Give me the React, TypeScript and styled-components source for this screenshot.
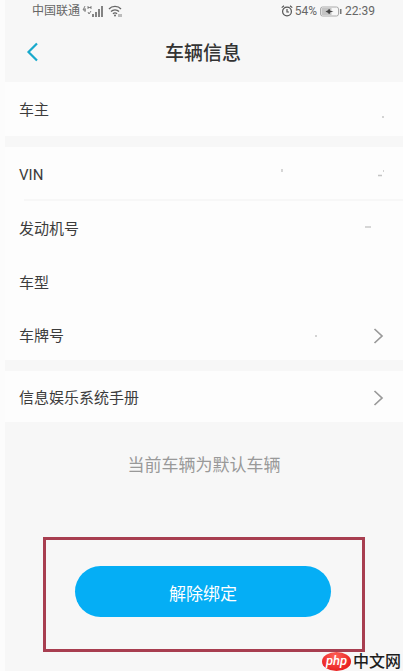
import React from "react";
import styled, { createGlobalStyle } from "styled-components";

const GlobalStyle = createGlobalStyle`
  * { box-sizing: border-box; }
  html, body { margin: 0; background: #f7f7f7; }
  body, button {
    font-family: Roboto, "Noto Sans CJK SC", sans-serif;
  }
`;

const Page = styled.div`
  position: relative;
  display: flex;
  flex-direction: column;
  min-height: 100vh;
  background: #f7f7f7;
  border-left: 5px solid #fcfcfc;
  overflow: hidden;
`;

const StatusBar = styled.div`
  display: flex;
  justify-content: space-between;
  align-items: center;
  height: 22px;
  padding: 0 28px 0 27px;
  font-size: 12px;
  line-height: 20px;
  color: #666;
`;

const StatusGroup = styled.div`
  display: flex;
  align-items: center;
  gap: 2px;
`;

const Header = styled.header`
  display: grid;
  grid-template-columns: 56px 1fr 56px;
  align-items: center;
  height: 60px;
`;

const BackButton = styled.button`
  display: flex;
  align-items: center;
  height: 40px;
  padding: 0 0 0 21px;
  border: 0;
  background: none;
  color: #18a9cc;
  cursor: pointer;
`;

const Title = styled.h1`
  margin: 0;
  padding: 4px 2px 0 0;
  text-align: center;
  font-size: 19px;
  line-height: 28px;
  font-weight: 500;
  color: #333;
`;

const Section = styled.section`
  margin-bottom: 11px;
  background: #fdfdfd;
`;

const Row = styled.div<{ $short?: boolean }>`
  display: flex;
  align-items: center;
  justify-content: space-between;
  width: 100%;
  height: ${(p) => (p.$short ? 51 : 54)}px;
  padding: 2px 19px 0 14px;
  border: 0;
  background: none;
  text-align: left;
  font-size: 15px;
  line-height: 22px;
  color: #3c3c3c;
`;

const LinkRow = styled(Row).attrs({ as: "button" })`
  cursor: pointer;
`;

const Divider = styled.hr`
  height: 2px;
  margin: -2px 0 0 19px;
  border: 0;
  background: #f7f7f7;
`;

const Footer = styled.main`
  display: flex;
  flex-direction: column;
  padding: 20px 38px 19px;
`;

const Notice = styled.p`
  margin: 0 0 60px;
  text-align: center;
  font-size: 17px;
  line-height: 24px;
  color: #999;
`;

const Highlight = styled.div`
  padding: 26px 31px 32px 29px;
  border: 3px solid #a83e50;
`;

const UnbindButton = styled.button`
  display: block;
  width: 100%;
  height: 51px;
  padding: 4px 0 0;
  border: 0;
  border-radius: 26px;
  background: #05aef5;
  color: #fff;
  font-size: 17px;
  line-height: 24px;
  cursor: pointer;
`;

const Watermark = styled.div`
  position: absolute;
  right: 2px;
  bottom: 0;
  display: flex;
  align-items: center;
  gap: 2px;
  height: 19px;
  color: #1d1d1d;
  font-size: 16px;
  line-height: 19px;
  font-weight: 500;
`;

const PhpBadge = styled.span`
  width: 29px;
  height: 19px;
  border-radius: 50%;
  background: radial-gradient(ellipse at 45% 25%, #ff6258, #e91f20 75%);
  color: #fff;
  text-align: center;
  font-size: 13px;
  line-height: 17px;
  font-style: italic;
`;

const Signal = () => (
  <svg width="24" height="13" viewBox="0 0 24 13" fill="none" stroke="#666" aria-hidden="true">
    <path d="M3 1 1 5h3M3 3v4M6 1v3M9 1v3M6 2.5h3M6 7l1 2 2-3" strokeWidth=".8" />
    <path d="M11 12V9M14 12V7M17 12V4M20 12V1" strokeWidth="1.6" />
  </svg>
);

const Wifi = () => (
  <svg width="14" height="12" viewBox="0 0 14 12" fill="none" stroke="#666" aria-hidden="true">
    <path d="M1 4C4 .5 10 .5 13 4M3 6.5c2-2.3 6-2.3 8 0M5 8.8c1-1.2 3-1.2 4 0" strokeWidth="1.3" />
    <circle cx="7" cy="10.5" r="1" fill="#666" stroke="none" />
    <path d="M11 9v3M13 9v3" strokeWidth=".8" />
  </svg>
);

const Alarm = () => (
  <svg width="12" height="12" viewBox="0 0 12 12" fill="none" stroke="#555" strokeWidth="1.2" aria-hidden="true">
    <circle cx="6" cy="6.5" r="4.4" />
    <path d="M6 4v3h2M.7 2.6 3 .8M11.3 2.6 9 .8" />
  </svg>
);

const Battery = () => (
  <svg width="24" height="11" viewBox="0 0 24 11" aria-hidden="true">
    <rect x="1.5" y="1" width="18" height="9" rx="2" fill="#f7f7f7" stroke="#aaa" />
    <rect x="2.5" y="2" width="10" height="7" fill="#c4c4c4" />
    <path d="M6.5 5.5 9.5 4V3l1 0 .8 1.7 3.2.8-3.2.8L10.500 8h-1V7z" fill="#444" />
    <path d="M21.7 3v5" stroke="#777" strokeWidth="1.6" />
  </svg>
);

const Back = () => (
  <svg width="13" height="20" viewBox="0 0 13 20" fill="none" stroke="currentColor" strokeWidth="2.2" aria-hidden="true">
    <path d="M11 1.5 2.5 10l8.500 8.500" />
  </svg>
);

const Chevron = () => (
  <svg width="11" height="16" viewBox="0 0 11 16" fill="none" stroke="#999" strokeWidth="1.7" aria-hidden="true">
    <path d="m1.5 1 7.5 7-7.5 7" />
  </svg>
);

const Marks = ({ d }: { d: string }) => (
  <svg width="110" height="20" viewBox="0 0 110 20" fill="none" stroke="#c4c4c4" strokeWidth="1.4" aria-hidden="true">
    <path d={d} />
  </svg>
);

const RowEnd = styled.span`
  display: flex;
  align-items: center;
`;

export default function App() {
  return (
    <>
      <GlobalStyle />
      <Page>
        <StatusBar>
          <StatusGroup>
            <span>中国联通</span>
            <Signal />
            <Wifi />
          </StatusGroup>
          <StatusGroup>
            <Alarm />
            <span>54%</span>
            <Battery />
            <span>22:39</span>
          </StatusGroup>
        </StatusBar>
        <Header>
          <BackButton type="button" aria-label="返回">
            <Back />
          </BackButton>
          <Title>车辆信息</Title>
        </Header>
        <Section>
          <Row>
            <span>车主</span>
            <Marks d="M108 17h2" />
          </Row>
        </Section>
        <Section>
          <Row>
            <span>VIN</span>
            <Marks d="M8 4v3M104 10.5h4M109 6h1" />
          </Row>
          <Divider />
          <Row>
            <span>发动机号</span>
            <Marks d="M91 8h6" />
          </Row>
          <Row>
            <span>车型</span>
          </Row>
          <LinkRow type="button" $short>
            <span>车牌号</span>
            <RowEnd>
              <Marks d="M52 10h2" />
              <Chevron />
            </RowEnd>
          </LinkRow>
        </Section>
        <Section>
          <LinkRow type="button" $short>
            <span>信息娱乐系统手册</span>
            <Chevron />
          </LinkRow>
        </Section>
        <Footer>
          <Notice>当前车辆为默认车辆</Notice>
          <Highlight>
            <UnbindButton type="button">解除绑定</UnbindButton>
          </Highlight>
        </Footer>
        <Watermark>
          <PhpBadge>php</PhpBadge>
          <span>中文网</span>
        </Watermark>
      </Page>
    </>
  );
}
